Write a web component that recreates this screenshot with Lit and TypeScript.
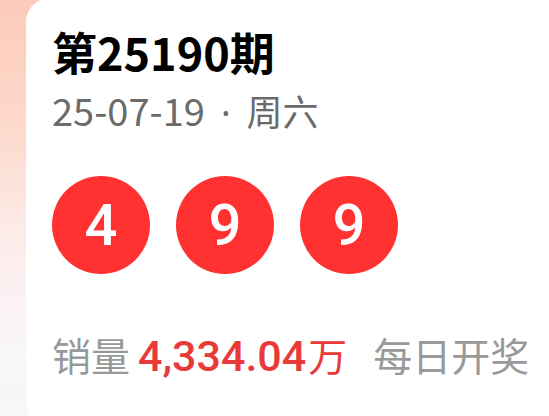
import { LitElement, html, css } from 'lit';
import { customElement, property } from 'lit/decorators.js';

@customElement('lottery-ball')
export class LotteryBall extends LitElement {
  static styles = css`
    :host {
      display: flex;
      justify-content: center;
      align-items: center;
      width: 98px;
      height: 98px;
      border-radius: 50%;
      background: #ff3131;
      color: #fff;
      font-family: Roboto, "Liberation Sans", sans-serif;
      font-size: 58px;
      font-weight: 500;
      line-height: 58px;
    }
  `;

  @property({ type: Number })
  value = 0;

  render() {
    return html`<span>${this.value}</span>`;
  }
}

@customElement('app-root')
export class AppRoot extends LitElement {
  static styles = css`
    :host {
      display: block;
      min-height: 100vh;
      box-sizing: border-box;
      overflow: hidden;
      padding-left: 26px;
      background: linear-gradient(#fccbba 0%, #fdd6c8 25%, #fce2d9 42%, #fdeae7 52%, #fcf1f2 68%, #f8f6f7 82%, #f7f7f8 100%);
      font-family: "Noto Sans CJK SC", sans-serif;
    }

    .card {
      margin-top: -2px;
      padding: 26px 20px 44px 26px;
      border-radius: 24px 0 0 24px;
      background: #fff;
    }

    .issue {
      margin: 0 0 4px;
      color: #000;
      font-size: 45px;
      font-weight: 700;
      line-height: 56px;
    }

    .date {
      display: flex;
      align-items: baseline;
      gap: 16px;
      margin: 0;
      color: #6b6b6b;
      font-size: 36px;
      line-height: 52px;
    }

    .day {
      font-size: 38px;
    }

    .dot {
      font-family: "Noto Sans", sans-serif;
    }

    .balls {
      display: flex;
      gap: 26px;
      margin: 37px 0 52px;
    }

    .sales {
      display: flex;
      align-items: baseline;
      margin: 0;
      color: #999;
      font-size: 39px;
      line-height: 56px;
      white-space: nowrap;
    }

    .amount {
      display: flex;
      align-items: baseline;
      gap: 2px;
      margin: 0 26px 0 8px;
      color: #e93a3a;
    }

    .number {
      font-family: Roboto, "Liberation Sans", sans-serif;
      font-size: 43px;
      font-weight: 500;
    }
  `;

  @property({ type: Array })
  numbers = [4, 9, 9];

  render() {
    return html`
      <section class="card">
        <h2 class="issue">第25190期</h2>
        <p class="date">
          <span class="day">25-07-19</span>
          <span class="dot">·</span>
          <span>周六</span>
        </p>
        <div class="balls">
          ${this.numbers.map((n) => html`<lottery-ball .value=${n}></lottery-ball>`)}
        </div>
        <p class="sales">
          <span>销量</span>
          <span class="amount"><span class="number">4,334.04</span><span>万</span></span>
          <span>每日开奖</span>
        </p>
      </section>
    `;
  }
}
